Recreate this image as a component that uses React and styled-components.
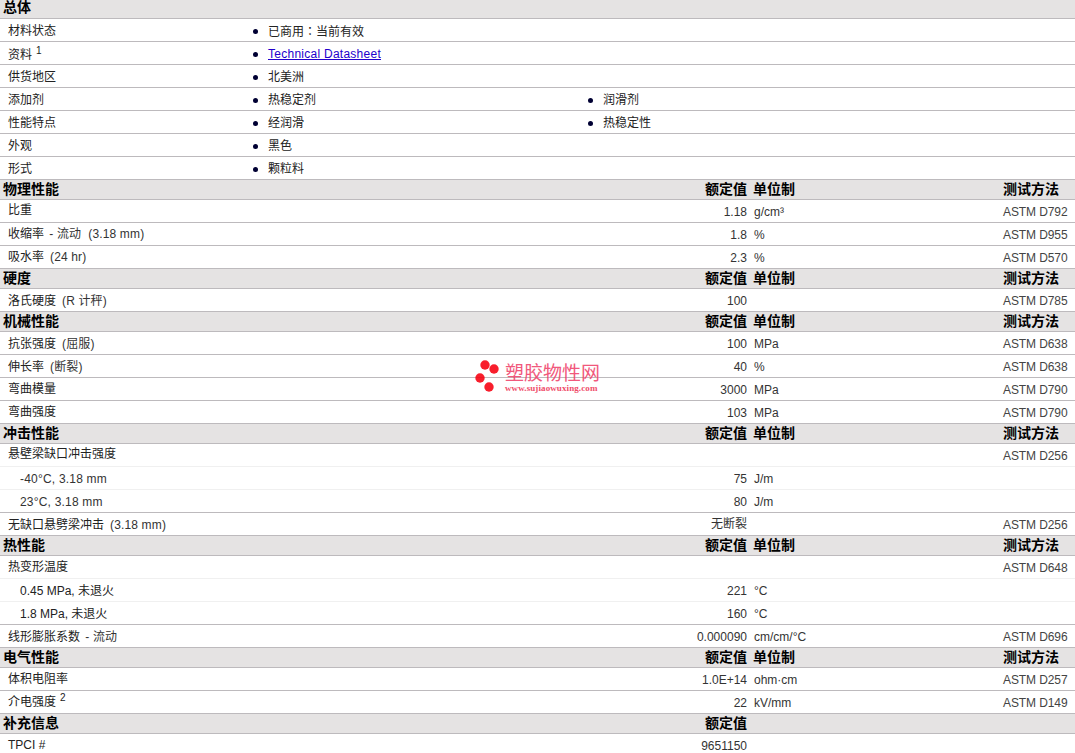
import React from "react";
import styled, { createGlobalStyle } from "styled-components";

const Global = createGlobalStyle`
  html, body { margin: 0; padding: 0; background: #fff; overflow: hidden; }
  body { font-family: "Liberation Sans", "Noto Sans CJK SC", sans-serif; font-size: 12px; color: #222; }
`;
const Page = styled.div`
  position: relative;
  width: 1075px;
  height: 753px;
  overflow: hidden;
`;
const Header = styled.div`
  display: grid;
  grid-template-columns: 747px 249px 1fr;
  height: ${p => p.$first ? 18 : 19}px;
  border-bottom: 1px solid #bdbabd;
  background: #e5e3e3;
  font-weight: 700;
  font-size: 14px;
  line-height: ${p => p.$first ? 15 : 18}px;
  color: #000;
`;
const HeaderTitle = styled.div`
  padding-left: 3px;
  display: flex;
  justify-content: space-between;
`;
const HeaderUnit = styled.div`padding-left: 6px;`;
const HeaderMethod = styled.div`padding-left: 7px;`;
const Row = styled.div`
  display: grid;
  height: 22px;
  grid-template-columns: ${p => p.$props ? "253px 335px 1fr" : "747px 256px 1fr"};
  border-bottom: ${p => p.$plain ? "1px solid #f0f0f0" : "1px solid #bdbabd"};
  line-height: 22px;
`;
const Name = styled.div`
  padding-left: 8px;
  color: #222;
  line-height: ${p => 24 + (p.$shift || 0) * 2}px;
`;
const NameValue = styled.div`
  display: flex;
  justify-content: space-between;
  line-height: 24px;
`;
const NameText = styled.span`
  padding-left: ${p => p.$sub ? 20 : 8}px;
  line-height: ${p => 22 + (p.$shift || 0) * 2}px;
  color: #222;
`;
const Val = styled.span`
  color: #333;
  line-height: ${p => p.$cjk ? 22 : 24}px;
`;
const Unit = styled.div`padding-left: 7px; line-height: 24px; color: #333;`;
const Method = styled.div`line-height: 24px; color: #444; letter-spacing: -0.1px;`;
const Sup = styled.sup`font-size: 10px; line-height: 0; margin-left: 4px; vertical-align: 5px;`;
const Item = styled.div`
  display: flex;
  align-items: center;
  gap: 10px;
  height: 22px;
  padding-top: 2px;
  box-sizing: border-box;
  line-height: 20px;
`;
const Dot = styled.span`
  width: 5px;
  height: 5px;
  border-radius: 50%;
  background: #000033;
  flex: none;
`;
const CenterColon = styled.span`font-family: "Noto Sans CJK TC", sans-serif;`;
const DocLink = styled.a`
  color: #2200cc;
  text-decoration: underline;
  letter-spacing: 0.26px;
`;
const Note = styled.span`
  margin-left: ${p => p.$gap ?? 6}px;
  letter-spacing: 0.15px;
  color: #333;
`;
const Latin = styled.span`
  letter-spacing: 0.2px;
  color: #333;
`;
const Logo = styled.div`
  position: absolute;
  left: 475px;
  top: 359px;
  width: 130px;
  height: 36px;
  opacity: 0.88;
  pointer-events: none;
`;
const LogoMark = styled.svg`
  position: absolute;
  left: 0;
  top: 0;
`;
const LogoName = styled.div`
  position: absolute;
  left: 30px;
  top: 3px;
  font-size: 19px;
  line-height: 23px;
  color: #f0426a;
  white-space: nowrap;
`;
const LogoUrl = styled.div`
  position: absolute;
  left: 30px;
  top: 24px;
  font-family: "Liberation Serif", serif;
  font-weight: 700;
  font-size: 9px;
  line-height: 10px;
  letter-spacing: 0.1px;
  color: #ee3355;
  white-space: nowrap;
`;

const Sec = ({ title, first, value = true, unit = true, method = true }) => (
  <Header $first={first}>
    <HeaderTitle><span>{title}</span>{value && <span>额定值</span>}</HeaderTitle>
    <HeaderUnit>{unit ? "单位制" : ""}</HeaderUnit>
    <HeaderMethod>{method ? "测试方法" : ""}</HeaderMethod>
  </Header>
);
const Prop = ({ name, items, sup, shift }) => (
  <Row $props>
    <Name $shift={shift}>{name}{sup && <Sup>{sup}</Sup>}</Name>
    {items.map((it, i) => <Item key={i}><Dot />{it}</Item>)}
  </Row>
);
const Data = ({ name, v, u, m, sub, plain, sup, shift, cjkValue }) => (
  <Row $plain={plain}>
    <NameValue>
      <NameText $sub={sub} $shift={shift}>{name}{sup && <Sup>{sup}</Sup>}</NameText>
      <Val $cjk={cjkValue}>{v}</Val>
    </NameValue>
    <Unit>{u}</Unit>
    <Method>{m}</Method>
  </Row>
);

export default function App() {
  return (
    <Page>
      <Global />
      <Sec title="总体" first value={false} unit={false} method={false} />
      <Prop name="材料状态" items={[<span>已商用<CenterColon>：</CenterColon>当前有效</span>]} />
      <Prop name="资料" sup="1" shift={1} items={[<DocLink href="#">Technical Datasheet</DocLink>]} />
      <Prop name="供货地区" items={["北美洲"]} />
      <Prop name="添加剂" items={["热稳定剂", "润滑剂"]} />
      <Prop name="性能特点" items={["经润滑", "热稳定性"]} />
      <Prop name="外观" items={["黑色"]} />
      <Prop name="形式" items={["颗粒料"]} />
      <Sec title="物理性能" />
      <Data name="比重" shift={-1} v="1.18" u="g/cm³" m="ASTM D792" />
      <Data name={<>收缩率 <Note $gap={2}>- 流动</Note><Note $gap={7}>(3.18 mm)</Note></>} v="1.8" u="%" m="ASTM D955" />
      <Data name={<>吸水率<Note>(24 hr)</Note></>} v="2.3" u="%" m="ASTM D570" />
      <Sec title="硬度" />
      <Data name={<>洛氏硬度<Note>(R 计秤)</Note></>} shift={1} v="100" m="ASTM D785" />
      <Sec title="机械性能" />
      <Data name={<>抗张强度<Note>(屈服)</Note></>} shift={1} v="100" u="MPa" m="ASTM D638" />
      <Data name={<>伸长率<Note>(断裂)</Note></>} shift={1} v="40" u="%" m="ASTM D638" />
      <Data name="弯曲模量" v="3000" u="MPa" m="ASTM D790" />
      <Data name="弯曲强度" v="103" u="MPa" m="ASTM D790" />
      <Sec title="冲击性能" />
      <Data name="悬壁梁缺口冲击强度" shift={-1} m="ASTM D256" plain />
      <Data name={<Latin>-40°C, 3.18 mm</Latin>} shift={1} v="75" u="J/m" sub plain />
      <Data name={<Latin>23°C, 3.18 mm</Latin>} shift={1} v="80" u="J/m" sub />
      <Data name={<>无缺口悬劈梁冲击<Note>(3.18 mm)</Note></>} shift={1} v="无断裂" cjkValue m="ASTM D256" />
      <Sec title="热性能" />
      <Data name="热变形温度" m="ASTM D648" plain />
      <Data name="0.45 MPa, 未退火" shift={1} v="221" u="°C" sub plain />
      <Data name="1.8 MPa, 未退火" shift={1} v="160" u="°C" sub />
      <Data name={<>线形膨胀系数 <Note $gap={2}>- 流动</Note></>} shift={1} v="0.000090" u="cm/cm/°C" m="ASTM D696" />
      <Sec title="电气性能" />
      <Data name="体积电阻率" v="1.0E+14" u="ohm·cm" m="ASTM D257" />
      <Data name="介电强度" sup="2" v="22" u="kV/mm" m="ASTM D149" />
      <Sec title="补充信息" unit={false} method={false} />
      <Data name="TPCI #" v="9651150" />
      <Logo>
        <LogoMark width="30" height="36" viewBox="0 0 30 36" aria-hidden="true">
          <circle cx="10" cy="6" r="4.7" fill="#f80010" />
          <circle cx="19" cy="10" r="4.7" fill="#f80010" />
          <circle cx="5" cy="19" r="4.7" fill="#f80010" />
          <circle cx="14" cy="28" r="4.7" fill="#f80010" />
        </LogoMark>
        <LogoName>塑胶物性网</LogoName>
        <LogoUrl>www.sujiaowuxing.com</LogoUrl>
      </Logo>
    </Page>
  );
}
